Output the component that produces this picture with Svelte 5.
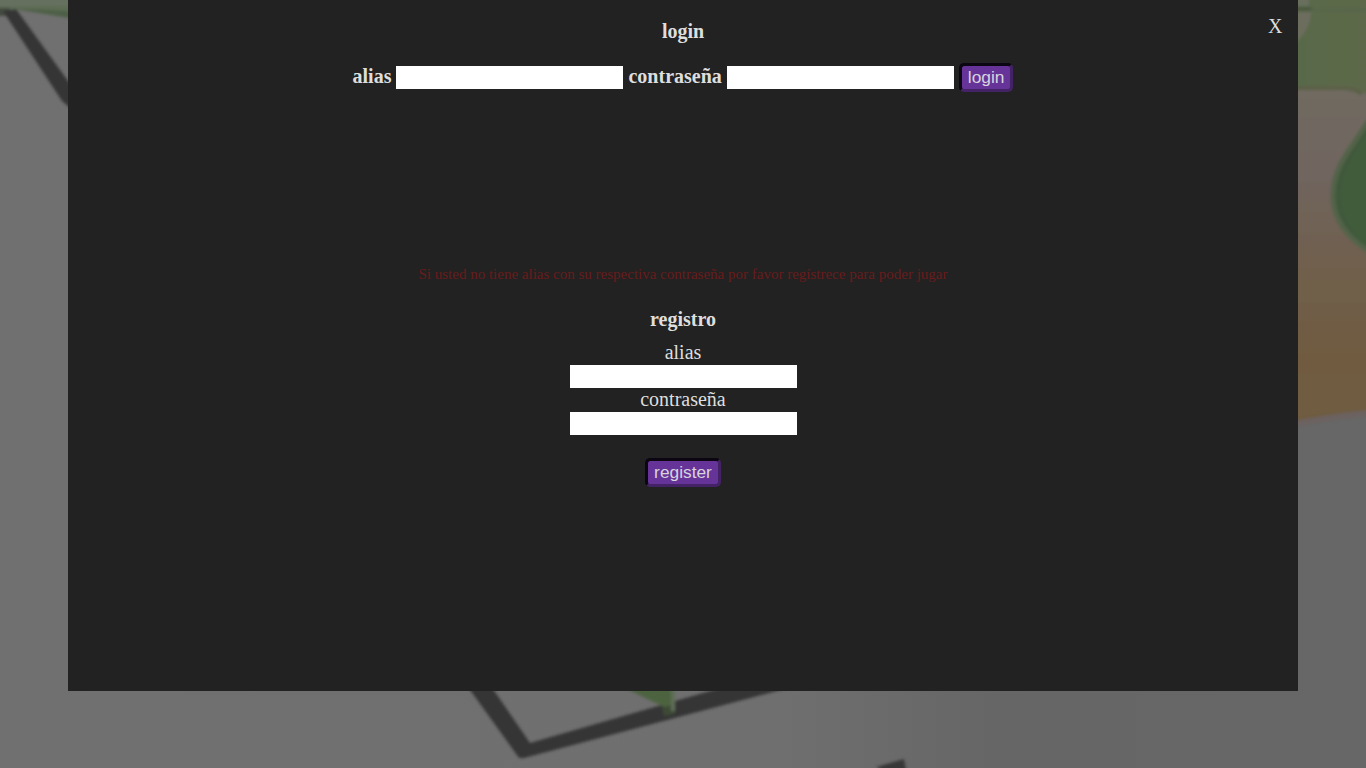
<script>
  let alias = $state('');
  let password = $state('');
  let newAlias = $state('');
  let newPassword = $state('');
</script>

<main>
  <svg class="scene" viewBox="0 0 1366 768" aria-hidden="true">
    <defs>
      <linearGradient id="ground" x1="0" x2="1">
        <stop offset="0" stop-color="#707070" />
        <stop offset=".57" stop-color="#6f6f6f" />
        <stop offset=".73" stop-color="#656665" />
        <stop offset="1" stop-color="#666766" />
      </linearGradient>
      <linearGradient id="skin" x1="0" y1="0" x2="0" y2="1">
        <stop offset="0" stop-color="#706a60" />
        <stop offset=".25" stop-color="#70655f" />
        <stop offset=".55" stop-color="#705f4b" />
        <stop offset=".8" stop-color="#705a40" />
        <stop offset="1" stop-color="#6e5b40" />
      </linearGradient>
      <linearGradient id="leaf" x1="0" x2="1">
        <stop offset="0" stop-color="#58694a" />
        <stop offset="1" stop-color="#5d684a" />
      </linearGradient>
      <filter id="soft" x="-10%" y="-10%" width="120%" height="120%">
        <feGaussianBlur stdDeviation="1.8" />
      </filter>
    </defs>
    <rect width="1366" height="768" fill="url(#ground)" />
    <g filter="url(#soft)">
      <path d="M-10-10H80V20Q45 11 10 9H-10Z" fill="#5d6d54" />
      <path d="M-10-10H80V6Q35 5-10 7Z" fill="#66705f" />
      <path d="M14 9Q45 9 80 12V20Q45 14 14 9Z" fill="#4e5f46" />
      <path d="M-10 12H10" fill="none" stroke="#424840" stroke-width="8" />
      <path d="M3 11L16 9L76 92V113L62 101Z" fill="#353535" />
      <path d="M460 676L519 758L524 758L818 680H748L530 743L484 676Z" fill="#353535" />
      <path d="M610 680H673V711Q650 701 610 680Z" fill="#4d633f" />
      <path d="M662 708L674 704L675 714L664 716Z" fill="#3c4a36" />
      <path d="M673 690V711" stroke="#5f6d59" stroke-width="4" />
      <path d="M876 767L904 759L907 775H890Z" fill="#383838" />

      <path d="M1280 88H1380V411Q1337 415 1280 426Z" fill="url(#skin)" />
      <path d="M1280-10H1380V106Q1367 90 1350 89H1280Z" fill="url(#leaf)" />
      <path d="M1280 88H1340Q1355 88 1362 94" fill="none" stroke="#5b6047" stroke-width="4" />
      <path d="M1290 12H1311Q1312 29 1290 48Z" fill="#6c6d5d" />
      <path d="M1285-10H1309V6H1285Z" fill="#68705d" />
      <path d="M1285 9H1312" stroke="#4b5841" stroke-width="4" />
      <path d="M1310 10H1380" stroke="#54634a" stroke-width="2" />
      <path d="M1380 103Q1364 128 1347 153C1323 190 1327 231 1380 257Z" fill="#40593a" stroke="#52644a" stroke-width="5" />
      <path d="M1380 118Q1348 157 1342 185C1338 216 1354 239 1380 252Z" fill="#415c3a" />
      <path d="M1280 427Q1330 416 1380 412" fill="none" stroke="#6c6260" stroke-width="6" />
    </g>
  </svg>

  <section class="panel">
    <button class="close" aria-label="X">X</button>
    <h1>login</h1>
    <form class="login" onsubmit={(event) => event.preventDefault()}>
      <label for="alias">alias</label>
      <input id="alias" bind:value={alias} />
      <label for="password">contraseña</label>
      <input id="password" type="password" bind:value={password} />
      <button class="action">login</button>
    </form>
    <p>Si usted no tiene alias con su respectiva contraseña por favor regístrece para poder jugar</p>
    <h2>registro</h2>
    <form class="register" onsubmit={(event) => event.preventDefault()}>
      <label for="new-alias">alias</label>
      <input id="new-alias" bind:value={newAlias} />
      <label for="new-password">contraseña</label>
      <input id="new-password" type="password" bind:value={newPassword} />
      <button class="action">register</button>
    </form>
  </section>
</main>

<style>
  :global(body) { margin: 0; overflow: hidden; }
  main {
    position: relative;
    box-sizing: border-box;
    height: 768px;
    padding: 0 68px;
    overflow: hidden;
    font: 20px/23px "Liberation Serif", serif;
    color: #dedede;
  }
  .scene { position: absolute; inset: 0; width: 1366px; height: 768px; }
  .panel {
    position: relative;
    box-sizing: border-box;
    height: 691px;
    padding-top: 20px;
    background: #222;
    text-align: center;
  }
  .close {
    position: absolute;
    top: 15px;
    right: 15.5px;
    padding: 0;
    border: 0;
    background: none;
    color: inherit;
    font: inherit;
  }
  h1, h2 { margin: 0; font-size: 20px; line-height: 23px; }
  .login {
    display: flex;
    justify-content: center;
    align-items: flex-start;
    gap: 5px;
    height: 29px;
    margin-top: 20px;
    font-weight: bold;
  }
  .login label { padding-top: 2px; }
  .login input { margin-top: 3px; }
  input {
    box-sizing: border-box;
    width: 227px;
    height: 23px;
    margin: 0;
    padding: 1px 2px;
    border: 0;
    background: #fff;
    font: 17px "Liberation Sans", sans-serif;
    outline: none;
  }
  .action {
    box-sizing: border-box;
    height: 29px;
    margin: 0;
    padding: 0 6px 2px;
    border: 3px solid;
    border-color: #0b0611 #442266 #442266 #0b0611;
    border-radius: 5px;
    background: #639;
    color: #d8d3dd;
    font: 17.3333px/20px "Liberation Sans", sans-serif;
  }
  p { margin: 174px 0 0; color: #691c1c; font-size: 15px; line-height: 17px; }
  h2 { margin-top: 25px; }
  .register { display: flex; flex-direction: column; align-items: center; margin-top: 10px; }
  .register label { height: 24px; }
  .register .action { margin-top: 23px; }
</style>
